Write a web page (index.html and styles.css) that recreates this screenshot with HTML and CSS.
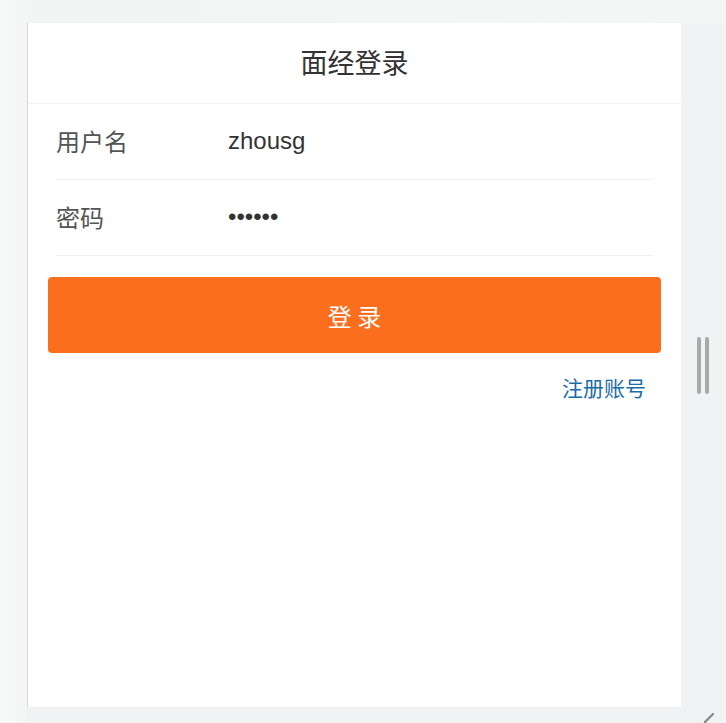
FILE: index.html
```html
<!DOCTYPE html>
<html lang="zh-CN">
<head>
<meta charset="utf-8">
<title>面经登录</title>
<link rel="stylesheet" href="styles.css">
</head>
<body>
<div class="page">
  <div class="sim">
    <main class="panel">
      <header class="header">
        <h1 class="title">面经登录</h1>
      </header>
      <form class="form">
        <label class="row">
          <span class="label">用户名</span>
          <input class="field" type="text" value="zhousg">
        </label>
        <label class="row">
          <span class="label">密码</span>
          <input class="field" type="password" value="123456">
        </label>
        <button class="btn" type="button">登 录</button>
        <div class="links">
          <a class="link" href="#">注册账号</a>
        </div>
      </form>
    </main>
    <div class="gutter">
      <div class="handle"><span class="bar"></span><span class="bar"></span></div>
    </div>
    <div class="bottom">
      <svg class="grip" width="12" height="10" viewBox="0 0 12 10"><path d="M11 1 L3 9" stroke="#8a8a8a" stroke-width="2.4" stroke-linecap="round"/></svg>
    </div>
  </div>
</div>
</body>
</html>
```

FILE: styles.css
```css
* { box-sizing: border-box; }
html, body { margin: 0; padding: 0; height: 100%; }
body {
  background: linear-gradient(to right, #f7f8f8 0, #f3f4f4 30px, #f4f5f5 100%);
  font-family: "Liberation Sans", "Noto Sans CJK SC", sans-serif;
  overflow: hidden;
}
.page {
  height: 100%;
  padding: 23px 2px 0 27px;
  display: flex;
}
.sim {
  flex: 1;
  background: #f1f2f4;
  display: grid;
  grid-template-columns: 654px 1fr;
  grid-template-rows: 684px 1fr;
}
.panel {
  background: #fff;
  border-left: 1px solid #d6d6d6;
  display: flex;
  flex-direction: column;
}
.header {
  height: 81px;
  padding-bottom: 4px;
  border-bottom: 1px solid #f3f3f3;
  display: flex;
  align-items: center;
  justify-content: center;
}
.title {
  margin: 0;
  font-size: 27px;
  font-weight: normal;
  color: #333;
  line-height: 1;
  font-family: "Noto Sans CJK SC", sans-serif;
}
.form {
  display: flex;
  flex-direction: column;
}
.row {
  height: 76px;
  margin: 0 28px;
  padding-bottom: 2px;
  border-bottom: 1px solid #f0f0f0;
  display: flex;
  align-items: center;
}
.label {
  width: 172px;
  font-size: 24px;
  color: #555;
  font-family: "Noto Sans CJK SC", sans-serif;
}
.field {
  flex: 1;
  border: none;
  outline: none;
  padding: 0;
  background: transparent;
  font-family: "Liberation Sans", sans-serif;
  font-size: 24px;
  color: #333;
}
.btn {
  margin: 21px 20px 0;
  height: 76px;
  border: none;
  border-radius: 4px;
  background: #fb6e1e;
  color: #fff;
  font-size: 24px;
  font-family: "Noto Sans CJK SC", sans-serif;
}
.links {
  display: flex;
  justify-content: flex-end;
  margin-top: 14px;
  padding-right: 35px;
}
.link {
  font-size: 21px;
  line-height: 40px;
  color: #1b6da5;
  text-decoration: none;
  font-family: "Noto Sans CJK SC", sans-serif;
}
.gutter {
  display: flex;
  align-items: center;
  justify-content: center;
}
.handle {
  display: flex;
  gap: 4px;
  height: 57px;
  margin-left: 1px;
}
.bar {
  width: 4px;
  border-radius: 2px;
  background: #a9a9a9;
}
.bottom {
  grid-column: 1 / 3;
  display: flex;
  justify-content: flex-end;
  align-items: flex-end;
  padding-right: 10px;
}
.grip { display: block; }
```
